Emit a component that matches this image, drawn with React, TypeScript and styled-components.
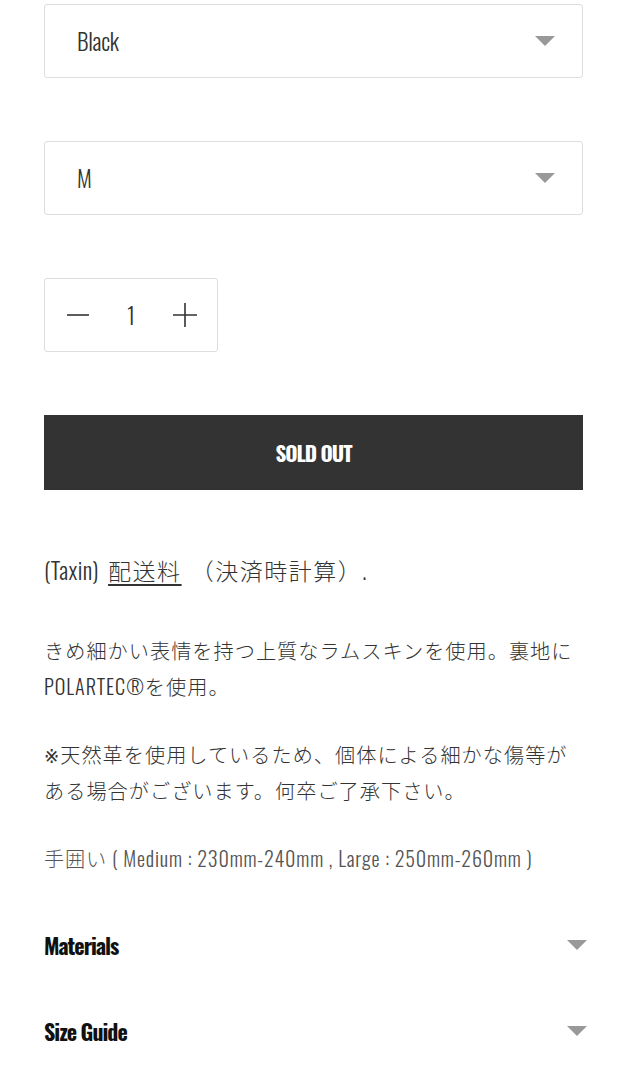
import React, { useState } from "react"
import styled, { createGlobalStyle } from "styled-components"

const condensed = `"Oswald", "Roboto Condensed", "DejaVu Sans Condensed", "Liberation Sans Narrow", "DejaVu Sans", "Noto Sans CJK JP", sans-serif`

const GlobalStyle = createGlobalStyle`
  html, body {
    margin: 0;
    padding: 0;
    background: #fff;
  }
  body {
    font-family: ${condensed};
    font-stretch: condensed;
    color: #333;
  }
`

const Caret: React.FC = () => (
  <svg width="20" height="10" viewBox="0 0 20 10">
    <path d="M0 0 L20 0 L10 10 Z" fill="#999" />
  </svg>
)

const App: React.FC = () => {
  const [qty, setQty] = useState(1)

  return (
    <Page>
      <GlobalStyle />
      <Select>
        <SelectValue>Black</SelectValue>
        <Caret />
      </Select>
      <Select>
        <SelectValue>M</SelectValue>
        <Caret />
      </Select>

      <Quantity>
        <QtyButton onClick={() => setQty(Math.max(1, qty - 1))}>
          <svg width="24" height="24" viewBox="0 0 24 24">
            <path d="M1 12 H23" stroke="#333" strokeWidth="1.6" />
          </svg>
        </QtyButton>
        <QtyValue>{qty}</QtyValue>
        <QtyButton onClick={() => setQty(qty + 1)}>
          <svg width="26" height="26" viewBox="0 0 26 26">
            <path d="M1 13 H25 M13 1 V25" stroke="#333" strokeWidth="1.6" />
          </svg>
        </QtyButton>
      </Quantity>

      <SoldOut disabled>SOLD OUT</SoldOut>

      <Shipping>
        <TaxLabel>(Taxin)</TaxLabel> <ShipLink href="#">配送料</ShipLink> （決済時計算）.
      </Shipping>

      <Descriptions>
        <Description>
          きめ細かい表情を持つ上質なラムスキンを使用。裏地に
          <br />
          POLARTEC®を使用。
        </Description>
        <Description>
          ※天然革を使用しているため、個体による細かな傷等が
          <br />
          ある場合がございます。何卒ご了承下さい。
        </Description>
        <Description $muted>
          手囲い ( Medium : 230mm-240mm , Large : 250mm-260mm )
        </Description>
      </Descriptions>

      <Accordion>
        <AccordionTitle>Materials</AccordionTitle>
        <Caret />
      </Accordion>
      <Accordion>
        <AccordionTitle>Size Guide</AccordionTitle>
        <Caret />
      </Accordion>
    </Page>
  )
}

const Page = styled.div`
  width: 539px;
  padding: 4px 45px 0 44px;
  display: flex;
  flex-direction: column;
`

const Select = styled.div`
  height: 74px;
  box-sizing: border-box;
  border: 1px solid #ddd;
  border-radius: 3px;
  display: flex;
  align-items: center;
  justify-content: space-between;
  padding: 0 27px 0 32px;
  margin-bottom: 63px;
`

const SelectValue = styled.span`
  font-size: 23px;
  font-weight: 300;
  letter-spacing: -0.3px;
  color: #333;
`

const Quantity = styled.div`
  width: 174px;
  height: 74px;
  box-sizing: border-box;
  border: 1px solid #ddd;
  border-radius: 3px;
  display: flex;
  align-items: center;
  justify-content: space-between;
  padding: 0 19px 0 21px;
  margin-bottom: 63px;
`

const QtyButton = styled.button`
  background: none;
  border: none;
  padding: 0;
  cursor: pointer;
  display: flex;
  align-items: center;
`

const QtyValue = styled.span`
  font-size: 23px;
  font-weight: 300;
  color: #333;
`

const SoldOut = styled.button`
  height: 75px;
  background: #333;
  color: #fff;
  border: none;
  font-family: ${condensed};
  font-stretch: condensed;
  font-weight: bold;
  font-size: 21px;
  letter-spacing: -1px;
  margin-bottom: 62px;
`

const Shipping = styled.p`
  margin: 0 0 44px;
  font-size: 23px;
  font-weight: 300;
  letter-spacing: 1.5px;
  word-spacing: 3px;
  line-height: 36px;
  color: #333;
`

const TaxLabel = styled.span`
  letter-spacing: 0.4px;
`

const ShipLink = styled.a`
  color: #333;
  text-decoration: underline;
  text-underline-offset: 4px;
`

const Descriptions = styled.div`
  display: flex;
  flex-direction: column;
  gap: 32px;
  margin-bottom: 26px;
`

const Description = styled.p<{ $muted?: boolean }>`
  margin: 0;
  font-size: 20.2px;
  font-weight: 300;
  line-height: 36px;
  letter-spacing: ${(p) => (p.$muted ? "0.8px" : "1px")};
  color: ${(p) => (p.$muted ? "#555" : "#333")};
`

const Accordion = styled.div`
  display: flex;
  align-items: center;
  justify-content: space-between;
  margin-right: -4px;
  height: 86px;
`

const AccordionTitle = styled.span`
  font-size: 22px;
  font-weight: bold;
  color: #111;
  letter-spacing: -1px;
`

export default App
